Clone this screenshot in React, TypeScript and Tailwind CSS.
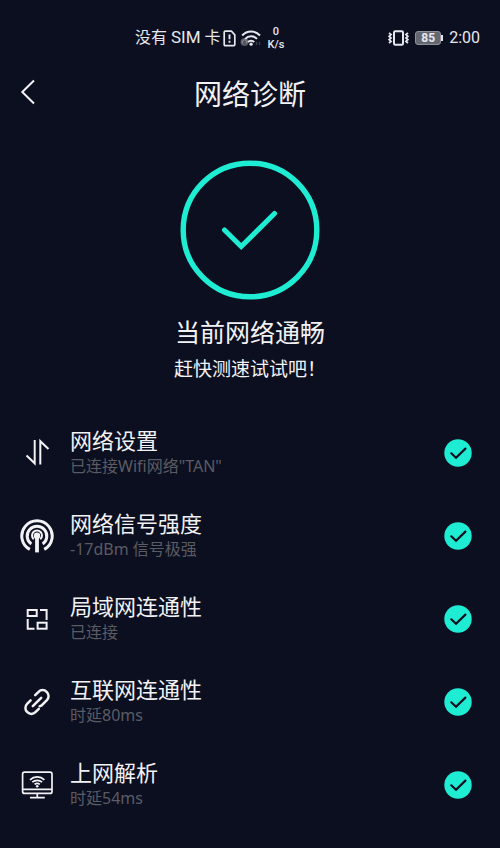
import type { ReactNode } from 'react';

function SimAlertIcon() {
  return (
    <svg width="13" height="17" viewBox="0 0 13 17" fill="none" stroke="#e6e7ee" strokeWidth="1.7" aria-hidden="true">
      <path d="M1.2 2.2 a1 1 0 0 1 1-1 H8.4 L11.8 4.8 V14.6 a1 1 0 0 1 -1 1 H2.2 a1 1 0 0 1 -1 -1 Z" strokeLinejoin="round" />
      <path d="M6.5 4.6 V9.2 M6.5 10.8 V12.8" strokeWidth="1.9" />
    </svg>
  );
}

function WifiStatusIcon() {
  return (
    <svg width="22" height="17" viewBox="0 0 22 17" fill="none" aria-hidden="true">
      <circle cx="4.5" cy="12" r="4" fill="#54565f" />
      <path d="M2.5 13.5 a2.4 2.4 0 1 1 4 0" stroke="#90929b" strokeWidth="1" />
      <g stroke="#e6e7ee" strokeWidth="2">
        <path d="M2.2 5.5 A12 12 0 0 1 20 5.5" />
        <path d="M5.2 8.9 A8 8 0 0 1 17 8.9" />
        <path d="M8 12 A4.2 4.2 0 0 1 14.2 12" />
      </g>
      <circle cx="11.1" cy="14.2" r="1.6" fill="#e6e7ee" />
      <path d="M16.5 12 V15 M19.5 12 V15" stroke="#3b3d4b" strokeWidth="1.4" />
    </svg>
  );
}

function VibrateIcon() {
  return (
    <svg width="21" height="16" viewBox="0 0 21 16" fill="none" stroke="#e6e7ee" aria-hidden="true">
      <rect x="6" y="1.2" width="9" height="13.6" rx="1.2" strokeWidth="2" />
      <path d="M1 3 L3 4.6 L1.2 6.3 L3 8 L1.2 9.7 L3 11.4 L1 13 M20 3 L18 4.6 L19.8 6.3 L18 8 L19.8 9.7 L18 11.4 L20 13" strokeWidth="1.8" />
    </svg>
  );
}

function StatusBar() {
  return (
    <div className="flex h-[76px] items-center justify-between pr-5 pl-[135px] font-['Roboto','Noto_Sans_CJK_SC',sans-serif] text-base text-[#e6e7ee]">
      <div className="flex items-center">
        <span>没有 <span className="text-[17px]">SIM</span> 卡</span>
        <span className="ml-0.5"><SimAlertIcon /></span>
        <span className="ml-1"><WifiStatusIcon /></span>
        <span className="ml-1.5 flex flex-col items-center text-[11px] leading-[13px] font-medium">
          <span>0</span>
          <span>K/s</span>
        </span>
      </div>
      <div className="flex items-center">
        <VibrateIcon />
        <span className="ml-1.5 flex items-center">
          <span className="flex h-[14px] w-[26px] items-center justify-center rounded-[3px] border border-[#8e909a] bg-[#646670] text-xs font-bold">85</span>
          <span className="h-1.5 w-0.5 bg-[#e6e7ee]" />
        </span>
        <span className="ml-1.5">2:00</span>
      </div>
    </div>
  );
}

function ArrowsIcon() {
  return (
    <svg width="34" height="34" viewBox="0 0 34 34" fill="none" stroke="#f2f2f5" strokeWidth="2" aria-hidden="true">
      <path d="M14.7 4 V27.3 L6.5 19.5" />
      <path d="M20.3 28.5 V5.2 L28.5 13" />
    </svg>
  );
}

function SignalIcon() {
  return (
    <svg width="34" height="34" viewBox="0 0 34 34" fill="none" stroke="#f2f2f5" aria-hidden="true">
      <path d="M9.8 30.4 A15.2 15.2 0 1 1 24.2 30.4" strokeWidth="3" />
      <path d="M11.3 25 A9.8 9.8 0 1 1 22.7 25" strokeWidth="3" />
      <path d="M13.7 20.2 A5 5 0 1 1 20.3 20.2" strokeWidth="2" />
      <circle cx="17" cy="16.8" r="3.2" fill="#f2f2f5" stroke="none" />
      <path d="M17 17 V33.4" strokeWidth="3.8" />
    </svg>
  );
}

function LanIcon() {
  return (
    <svg width="34" height="34" viewBox="0 0 34 34" fill="none" stroke="#f2f2f5" strokeWidth="2" aria-hidden="true">
      <rect x="7.7" y="8" width="9" height="6" />
      <rect x="17.6" y="20.7" width="9" height="6" />
      <path d="M20 8 H26.6 V18" />
      <path d="M7.7 17 V26.7 H14.5" />
    </svg>
  );
}

function LinkIcon() {
  return (
    <svg width="34" height="34" viewBox="0 0 34 34" fill="none" stroke="#f2f2f5" strokeWidth="2.5" strokeLinecap="round" aria-hidden="true">
      <path d="M15.2 10.2 L18.6 6.8 a5.6 5.6 0 0 1 8 0 l.3 .3 a5.6 5.6 0 0 1 0 8 L21.6 20.4 L19.6 21.3" />
      <path d="M18.8 23.8 L15.4 27.2 a5.6 5.6 0 0 1 -8 0 l-.3 -.3 a5.6 5.6 0 0 1 0 -8 L10.6 15.4" />
      <path d="M12.8 21.2 L21.2 12.8" />
    </svg>
  );
}

function MonitorIcon() {
  return (
    <svg width="34" height="34" viewBox="0 0 34 34" fill="none" stroke="#f2f2f5" strokeWidth="1.7" aria-hidden="true">
      <rect x="2.6" y="4.2" width="29.4" height="21.2" rx="2" />
      <path d="M2.6 21.4 H32 M17.3 25.4 V29 M10 29.6 H24.8" />
      <path d="M10 11.8 A10.5 10.5 0 0 1 24.4 11.8 M12.3 14.2 A7.3 7.3 0 0 1 22.1 14.2 M14.6 16.4 A4 4 0 0 1 19.8 16.4" />
      <circle cx="17.2" cy="18.2" r="1.3" fill="#f2f2f5" stroke="none" />
    </svg>
  );
}

function PassedIcon() {
  return (
    <svg width="28" height="28" viewBox="0 0 28 28" fill="none" role="img" aria-label="正常">
      <circle cx="14" cy="14" r="13.7" fill="#1eecd3" />
      <path d="M7.3 14.3 L12 18.7 L21.4 9.6" stroke="#0c0f20" strokeWidth="2.2" strokeLinecap="round" />
    </svg>
  );
}

type Check = { title: string; detail: string; icon: ReactNode };

const checks: Check[] = [
  { title: '网络设置', detail: '已连接Wifi网络"TAN"', icon: <ArrowsIcon /> },
  { title: '网络信号强度', detail: '-17dBm 信号极强', icon: <SignalIcon /> },
  { title: '局域网连通性', detail: '已连接', icon: <LanIcon /> },
  { title: '互联网连通性', detail: '时延80ms', icon: <LinkIcon /> },
  { title: '上网解析', detail: '时延54ms', icon: <MonitorIcon /> },
];

export default function App() {
  return (
    <div className="min-h-screen bg-[#0c0f20] font-['Roboto','Noto_Sans_CJK_SC',sans-serif] text-[#f2f2f5]">
      <StatusBar />
      <header className="grid grid-cols-[1fr_auto_1fr] items-start px-5">
        <button type="button" aria-label="返回" className="flex h-8 w-4 items-center">
          <svg width="16" height="26" viewBox="0 0 16 26" fill="none" stroke="#f2f2f5" strokeWidth="2" aria-hidden="true">
            <path d="M14 1.5 L2.3 13 L14 24.5" />
          </svg>
        </button>
        <h1 className="text-[28px] leading-10">网络诊断</h1>
      </header>
      <main>
        <section className="flex flex-col items-center pt-11">
          <svg width="140" height="140" viewBox="0 0 140 140" fill="none" stroke="#1eecd3" strokeWidth="5.4" aria-hidden="true">
            <circle cx="70" cy="70" r="66.8" />
            <path d="M44.5 70 L61.2 86.6 L94.5 53.5" strokeLinecap="round" strokeWidth="5" />
          </svg>
          <h2 className="mt-[18px] text-[25px] leading-8">当前网络通畅</h2>
          <p className="mt-2 text-[19px] leading-6">赶快测速试试吧！</p>
        </section>
        <ul className="mt-[29px]">
          {checks.map((check) => (
            <li key={check.title} className="flex h-[83px] items-center pr-7 pl-5">
              {check.icon}
              <div className="ml-4 flex-1 pb-1">
                <h3 className="pt-0.5 text-[22px] leading-7">{check.title}</h3>
                <p className="font-['Noto_Sans','Noto_Sans_CJK_SC',sans-serif] text-base leading-5 text-[#5a5c64]">{check.detail}</p>
              </div>
              <PassedIcon />
            </li>
          ))}
        </ul>
      </main>
    </div>
  );
}
